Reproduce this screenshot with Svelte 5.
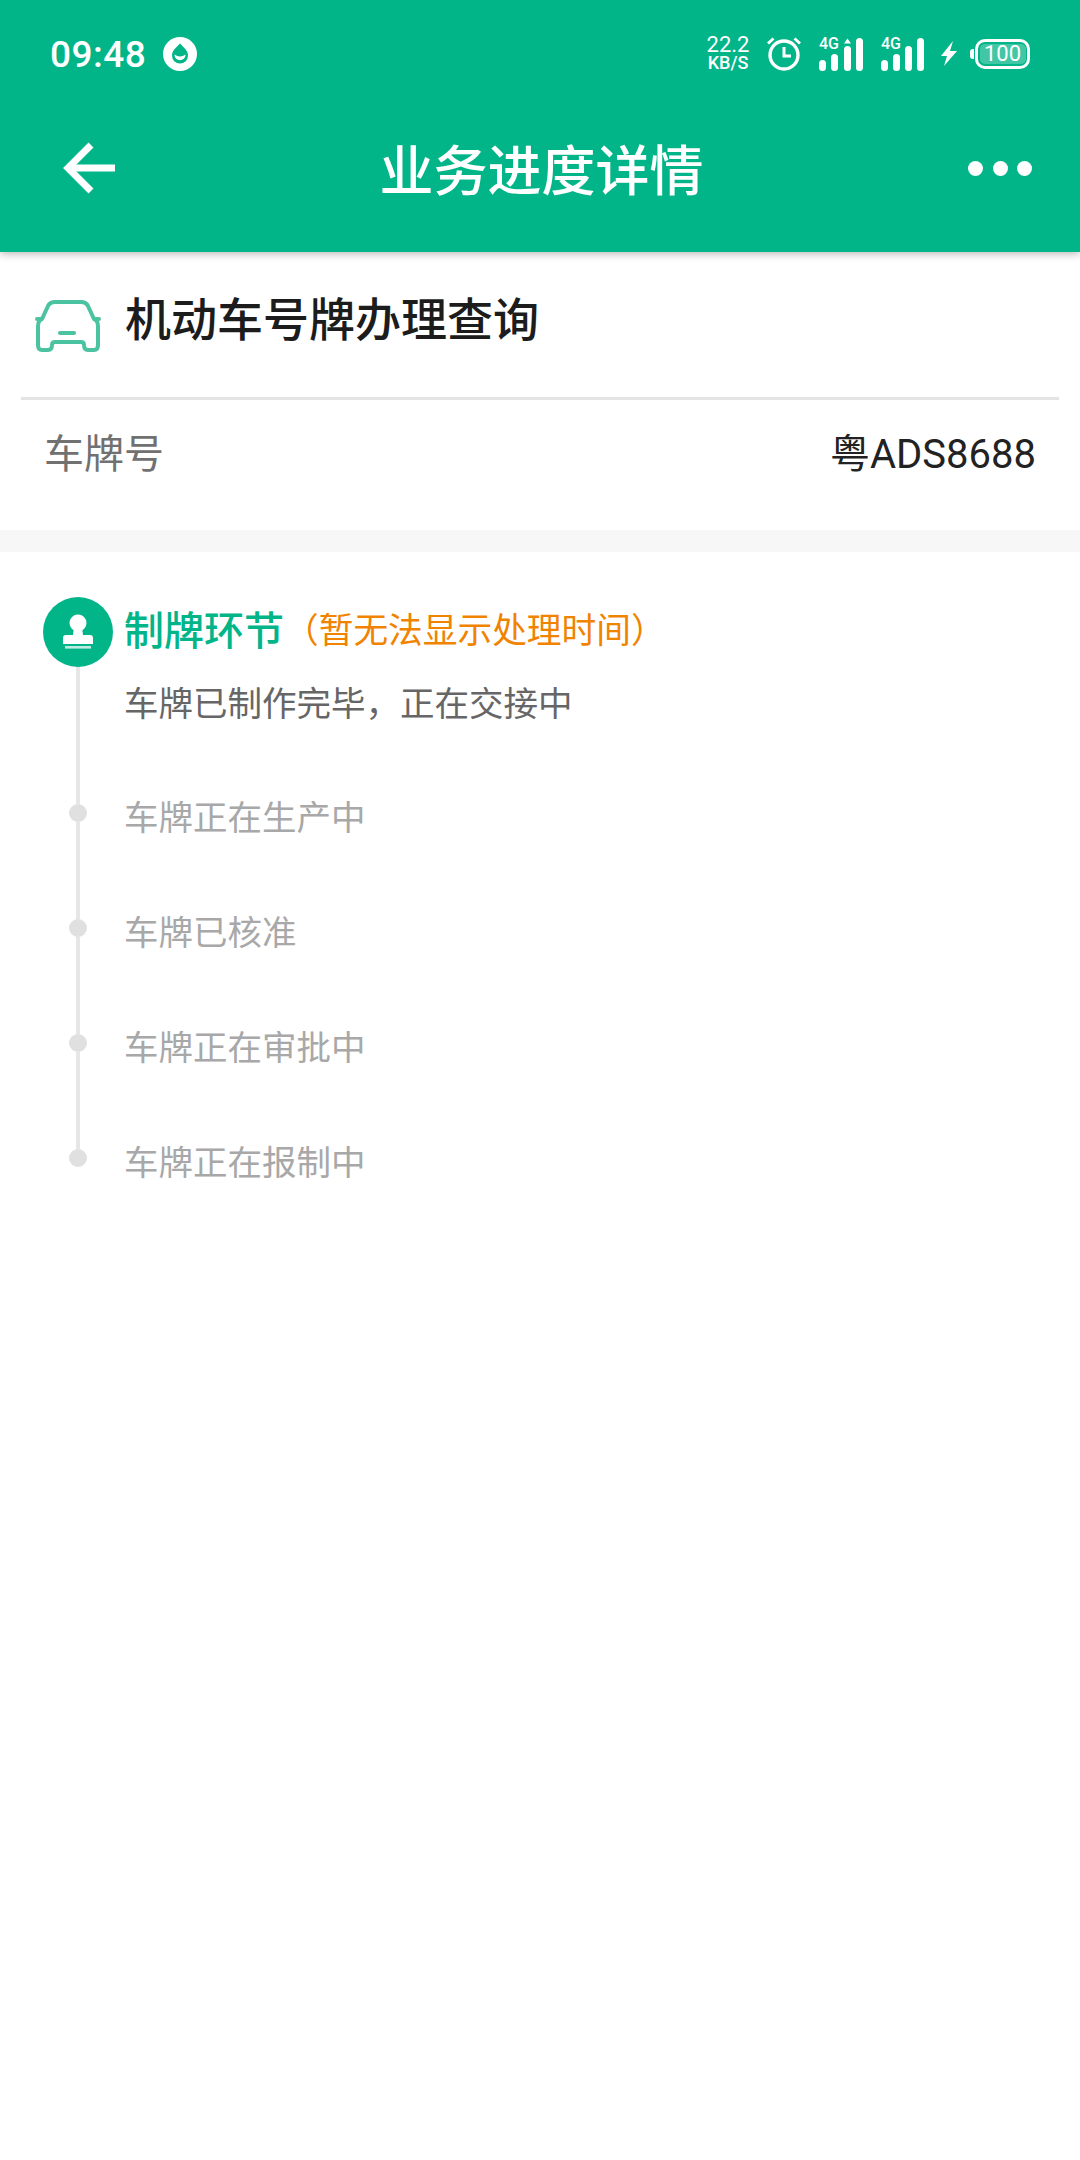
<script>
  const steps = ['车牌正在生产中', '车牌已核准', '车牌正在审批中', '车牌正在报制中']
</script>

<div class="page">
  <header class="top">
    <div class="status">
      <div class="status-left">
        <span class="time">09:48</span>
        <svg class="drop" viewBox="0 0 34 34">
          <circle cx="17" cy="17" r="17" fill="#fff" />
          <path d="M17 6.5 C20 10 25 13 25 18.5 A8 8 0 0 1 9 18.5 C9 13 14 10 17 6.5Z" fill="#02b589" />
          <path d="M11.5 17.5 C15 20 19 20 22.5 17.5 C22.5 25 11.5 25 11.5 17.5Z" fill="#fff" />
        </svg>
      </div>
      <div class="status-right">
        <div class="speed"><span>22.2</span><span class="unit">KB/S</span></div>
        <svg class="alarm" viewBox="0 0 34 34" fill="none" stroke="#fff">
          <circle cx="17" cy="18" r="14" stroke-width="3.4" />
          <path d="M17 10 V19 H24" stroke-width="3" />
          <path d="M1 6.5 L6.5 1.5 M33 6.5 L27.5 1.5" stroke-width="3" />
        </svg>
        <div class="signal">
          <span class="net">4G</span>
          <svg viewBox="0 0 44 33" fill="#fff">
            <rect x="0" y="22" width="7" height="11" rx="3.5" />
            <rect x="12" y="16" width="7" height="17" rx="3.5" />
            <rect x="25" y="8" width="7" height="25" rx="3.5" />
            <path d="M28.5 0.5 L32 5.5 H25Z" />
            <rect x="37" y="0" width="7" height="33" rx="3.5" />
          </svg>
        </div>
        <div class="signal">
          <span class="net">4G</span>
          <svg viewBox="0 0 44 33" fill="#fff">
            <rect x="0" y="22" width="7" height="11" rx="3.5" />
            <rect x="12" y="16" width="7" height="17" rx="3.5" />
            <rect x="24" y="8" width="7" height="25" rx="3.5" />
            <rect x="36" y="0" width="7" height="33" rx="3.5" />
          </svg>
        </div>
        <svg class="bolt" viewBox="0 0 18 26" fill="#fff">
          <path d="M13 0 L1 15 H7 L4 25 L17 10 H10Z" />
        </svg>
        <div class="battery">
          <span class="nub"></span>
          <span class="cell">100</span>
        </div>
      </div>
    </div>
    <nav class="bar">
      <svg class="back" viewBox="0 0 52 52" fill="none" stroke="#fff" stroke-width="7">
        <path d="M28 3 L5 26 L28 49" />
        <path d="M5 26 H52" />
      </svg>
      <h1>业务进度详情</h1>
      <div class="more"><i></i><i></i><i></i></div>
    </nav>
  </header>

  <section class="service">
    <svg class="car" viewBox="0 0 68 54" fill="none" stroke="#4cc3a0" stroke-width="4" stroke-linejoin="round" stroke-linecap="round">
      <path d="M3 20 H8 L14 7 Q16 3 21 3 H47 Q52 3 54 7 L60 20 H65" />
      <path d="M8 20 Q4 22 4 27 V46 Q4 51 8 51 H14 Q18 51 18 46 Q18 43 21 43 H47 Q50 43 50 46 Q50 51 54 51 H60 Q64 51 64 46 V27 Q64 22 60 20" />
      <path d="M26 34 H40" />
    </svg>
    <h2>机动车号牌办理查询</h2>
  </section>
  <div class="rule"></div>
  <div class="plate">
    <span class="plate-label">车牌号</span>
    <span class="plate-value">粤ADS8688</span>
  </div>
  <div class="band"></div>

  <section class="timeline">
    <div class="step current">
      <div class="rail">
        <svg class="badge" viewBox="0 0 70 70">
          <circle cx="35" cy="35" r="35" fill="#02b589" />
          <circle cx="35" cy="26" r="8.5" fill="#fff" />
          <path d="M31 30 H39 L40 38 H47 Q50 38 50 41 V47 H20 V41 Q20 38 23 38 H30Z" fill="#fff" />
          <rect x="22" y="49" width="26" height="2.6" fill="#fff" opacity="0.75" />
        </svg>
        <div class="line"></div>
      </div>
      <div class="body">
        <div class="phase"><b>制牌环节</b><span>（暂无法显示处理时间）</span></div>
        <p class="now">车牌已制作完毕，正在交接中</p>
      </div>
    </div>
    {#each steps as text}
      <div class="step">
        <div class="rail">
          <span class="dot"></span>
          <div class="line"></div>
        </div>
        <p class="past">{text}</p>
      </div>
    {/each}
  </section>
</div>

<style>
  :global(body) {
    background: #fff;
  }

  .page {
    width: 1080px;
    min-height: 2160px;
    background: #fff;
    font-family: "Noto Sans CJK SC", Roboto, sans-serif;
  }

  .top {
    height: 252px;
    background: #02b589;
    box-shadow: 0 2px 8px rgba(0, 0, 0, 0.28);
    color: #fff;
    position: relative;
  }

  .status {
    height: 108px;
    display: flex;
    justify-content: space-between;
    align-items: center;
    padding: 0 50px 0 50px;
  }

  .status-left {
    display: flex;
    align-items: center;
    gap: 17px;
  }

  .time {
    font-family: Roboto, sans-serif;
    font-weight: 500;
    font-size: 37px;
    letter-spacing: 0.5px;
  }

  .drop {
    width: 34px;
    height: 34px;
  }

  .status-right {
    display: flex;
    align-items: center;
    gap: 18px;
  }

  .speed {
    display: flex;
    flex-direction: column;
    align-items: center;
    font-family: Roboto, sans-serif;
    font-size: 22px;
    line-height: 18px;
    width: 42px;
  }

  .speed .unit {
    font-size: 18px;
    font-weight: 500;
  }

  .alarm {
    width: 34px;
    height: 34px;
  }

  .signal {
    position: relative;
    width: 44px;
    height: 33px;
  }

  .signal svg {
    width: 44px;
    height: 33px;
    display: block;
  }

  .net {
    position: absolute;
    left: 0;
    top: -2px;
    font-family: Roboto, sans-serif;
    font-size: 16px;
    font-weight: 500;
    line-height: 16px;
  }

  .bolt {
    width: 18px;
    height: 26px;
    margin-left: -3px;
  }

  .battery {
    position: relative;
    width: 55px;
    height: 30px;
    border: 3px solid #fff;
    border-radius: 10px;
    box-sizing: border-box;
    display: flex;
    align-items: center;
    justify-content: center;
    margin-left: -1px;
  }

  .nub {
    position: absolute;
    left: -8px;
    top: 7px;
    width: 4px;
    height: 10px;
    background: #fff;
    border-radius: 3px 0 0 3px;
  }

  .cell {
    width: 46px;
    height: 20px;
    border-radius: 5px;
    background: rgba(255, 255, 255, 0.25);
    font-family: Roboto, sans-serif;
    font-size: 22px;
    line-height: 20px;
    text-align: center;
  }

  .bar {
    height: 144px;
    display: flex;
    align-items: center;
    justify-content: space-between;
    padding: 0 48px 24px 63px;
    box-sizing: border-box;
  }

  .back {
    width: 52px;
    height: 52px;
  }

  h1 {
    margin: 0;
    font-size: 54px;
    font-weight: 500;
    line-height: 72px;
  }

  .more {
    display: flex;
    gap: 9.5px;
  }

  .more i {
    width: 15px;
    height: 15px;
    border-radius: 50%;
    background: #fff;
  }

  .service {
    height: 145px;
    display: flex;
    align-items: flex-start;
    padding: 47px 0 0 34px;
    box-sizing: border-box;
  }

  .car {
    width: 68px;
    height: 54px;
    flex: none;
  }

  h2 {
    margin: -15px 0 0 23px;
    font-size: 46px;
    font-weight: 500;
    line-height: 64px;
    color: #1c1c1c;
  }

  .rule {
    height: 3px;
    margin: 0 21px;
    background: #e4e4e4;
  }

  .plate {
    height: 130px;
    padding: 23px 44px 0;
    display: flex;
    justify-content: space-between;
    align-items: flex-start;
    line-height: 56px;
    font-size: 40px;
    box-sizing: border-box;
  }

  .plate-label {
    color: #717171;
  }

  .plate-value {
    color: #222;
    font-family: Roboto, "Noto Sans CJK SC", sans-serif;
    font-size: 40px;
    margin-top: 4px;
  }

  .band {
    height: 22px;
    background: #f7f7f7;
  }

  .timeline {
    padding: 45px 0 0 43px;
  }

  .step {
    display: flex;
    height: 115px;
  }

  .step.current {
    height: 207px;
  }

  .step:last-child {
    height: 18px;
  }

  .step:last-child .line {
    display: none;
  }

  .rail {
    width: 70px;
    flex: none;
    display: flex;
    flex-direction: column;
    align-items: center;
  }

  .badge {
    width: 70px;
    height: 70px;
    flex: none;
    display: block;
  }

  .line {
    flex: 1;
    width: 4px;
    background: #e6e6e6;
  }

  .dot {
    width: 18px;
    height: 18px;
    flex: none;
    border-radius: 50%;
    background: #e0e0e0;
  }

  .body {
    margin-left: 11px;
  }

  .phase {
    display: flex;
    align-items: center;
    height: 62px;
    font-size: 40px;
  }

  .phase b {
    color: #02b589;
    font-weight: 500;
  }

  .phase span {
    color: #f08300;
    font-size: 34.7px;
  }

  .now {
    margin: 18px 0 0;
    font-size: 34.5px;
    line-height: 48px;
    color: #666;
  }

  .past {
    margin: 2px 0 0 11px;
    font-size: 34.5px;
    line-height: 18px;
    color: #a8a8a8;
  }
</style>
